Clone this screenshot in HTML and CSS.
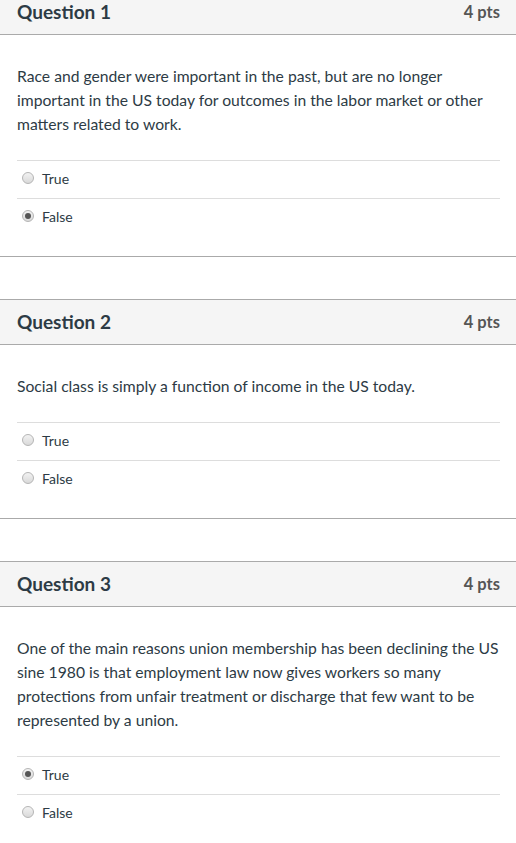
FILE: index.html
```html
<!DOCTYPE html>
<html>
<head>
<meta charset="utf-8">
<link rel="stylesheet" href="styles.css">
</head>
<body>
<div class="page">
  <section class="question first">
    <div class="q-header">
      <span class="q-title">Question 1</span>
      <span class="q-pts">4 pts</span>
    </div>
    <div class="q-body">
      <p class="q-text">Race and gender were important in the past, but are no longer important in the US today for outcomes in the labor market or other matters related to work.</p>
      <div class="answers">
        <div class="answer"><span class="radio"></span><span class="label">True</span></div>
        <div class="answer"><span class="radio checked"></span><span class="label">False</span></div>
      </div>
    </div>
  </section>
  <section class="question">
    <div class="q-header">
      <span class="q-title">Question 2</span>
      <span class="q-pts">4 pts</span>
    </div>
    <div class="q-body">
      <p class="q-text">Social class is simply a function of income in the US today.</p>
      <div class="answers">
        <div class="answer"><span class="radio"></span><span class="label">True</span></div>
        <div class="answer"><span class="radio"></span><span class="label">False</span></div>
      </div>
    </div>
  </section>
  <section class="question">
    <div class="q-header">
      <span class="q-title">Question 3</span>
      <span class="q-pts">4 pts</span>
    </div>
    <div class="q-body">
      <p class="q-text">One of the main reasons union membership has been declining the US sine 1980 is that employment law now gives workers so many protections from unfair treatment or discharge that few want to be represented by a union.</p>
      <div class="answers">
        <div class="answer"><span class="radio checked"></span><span class="label">True</span></div>
        <div class="answer"><span class="radio"></span><span class="label">False</span></div>
      </div>
    </div>
  </section>
</div>
</body>
</html>
```

FILE: styles.css
```css
html, body {
  margin: 0;
  padding: 0;
  background: #ffffff;
}

body {
  font-family: Lato, "Liberation Sans", sans-serif;
  color: #2d3b45;
  overflow: hidden;
}

.page {
  width: 516px;
}

.question {
  border-top: 1px solid #aaaaaa;
  border-bottom: 1px solid #aaaaaa;
  margin-bottom: 42px;
}

.question.first {
  margin-top: -11px;
}

.q-header {
  background: #f5f5f5;
  border-bottom: 1px solid #aaaaaa;
  display: flex;
  align-items: center;
  justify-content: space-between;
  padding: 0 16px 1px 17px;
  box-sizing: border-box;
  height: 45px;
}

.q-title {
  font-size: 19px;
  font-weight: 700;
  color: #2d3b45;
}

.q-pts {
  font-size: 16.5px;
  font-weight: 700;
  color: #555555;
}

.q-body {
  padding: 29px 16px 20px 17px;
}

.q-text {
  margin: 0 0 24px 0;
  font-size: 15.7px;
  line-height: 24px;
}

.answer {
  border-top: 1px solid #dddddd;
  display: flex;
  align-items: center;
  padding-bottom: 3px;
  box-sizing: border-box;
  height: 38px;
}

.radio {
  width: 12px;
  height: 12px;
  border-radius: 50%;
  border: 1px solid #b5b5b5;
  background: linear-gradient(#f2f2f2, #d9d9d9);
  margin-left: 5px;
  margin-right: 8px;
  display: flex;
  align-items: center;
  justify-content: center;
  box-sizing: border-box;
}

.radio.checked::after {
  content: "";
  width: 6px;
  height: 6px;
  border-radius: 50%;
  background: #555555;
}

.label {
  font-size: 14px;
  color: #2d3b45;
}
```
